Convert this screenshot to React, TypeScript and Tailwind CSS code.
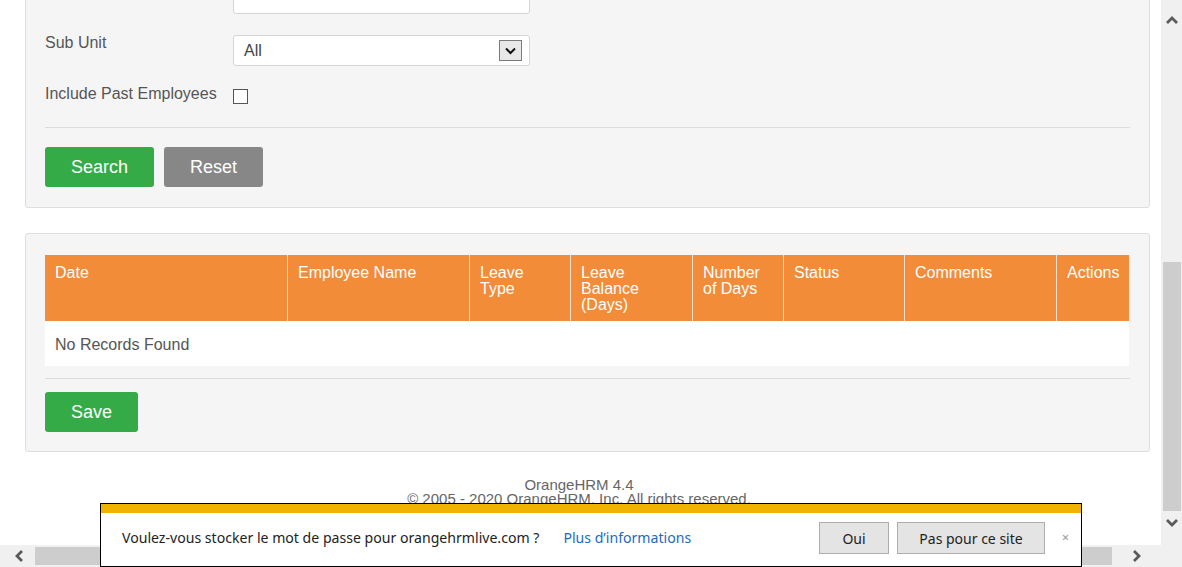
import React from 'react';

const columns = [
  { w: 'w-[243px]', label: ['Date'] },
  { w: 'w-[182px]', label: ['Employee Name'] },
  { w: 'w-[101px]', label: ['Leave', 'Type'] },
  { w: 'w-[122px]', label: ['Leave', 'Balance', '(Days)'] },
  { w: 'w-[91px]', label: ['Number', 'of Days'] },
  { w: 'w-[121px]', label: ['Status'] },
  { w: 'w-[152px]', label: ['Comments'] },
  { w: 'w-[72px]', label: ['Actions'] },
];

const Chevron = ({ dir }: { dir: 'up' | 'down' | 'left' | 'right' }) => {
  const paths: Record<string, string> = {
    up: 'M1 8 L6 3 L11 8',
    down: 'M1 3 L6 8 L11 3',
    left: 'M8 1 L3 6 L8 11',
    right: 'M3 1 L8 6 L3 11',
  };
  const vertical = dir === 'up' || dir === 'down';
  return (
    <svg width={vertical ? 12 : 11} height={vertical ? 11 : 12} viewBox={vertical ? '0 0 12 11' : '0 0 11 12'}>
      <path d={paths[dir]} fill="none" stroke="#5a5a5a" strokeWidth="2.8" />
    </svg>
  );
};

const SearchPanel = () => (
  <div className="-mt-[38px] border border-[#dedede] rounded-[3px] bg-[#f6f5f6] px-[19px] pt-[20px] pb-[20px]">
    <div className="flex">
      <div className="w-[188px]" />
      <div className="w-[297px] h-[31px] bg-white border border-[#d5d5d5] rounded-[3px]" />
    </div>

    <div className="flex items-start mt-[21px]">
      <label className="w-[188px] -mt-[1px] text-[16px] leading-[18px] text-[#555]">Sub Unit</label>
      <div className="w-[297px] h-[31px] bg-white border border-[#d5d5d5] rounded-[3px] flex items-center justify-between pl-[10px] pr-[7px]">
        <span className="text-[16px] text-[#444]">All</span>
        <div className="w-[23px] h-[21px] border border-[#7b7b7b] bg-[#e8e8e8] flex items-center justify-center">
          <svg width="11" height="8" viewBox="0 0 11 8">
            <path d="M1 1.5 L5.5 6 L10 1.5" fill="none" stroke="#111" strokeWidth="2" />
          </svg>
        </div>
      </div>
    </div>

    <div className="flex items-start mt-[23px]">
      <label className="w-[188px] -mt-[4px] text-[16px] leading-[18px] text-[#555]">Include Past Employees</label>
      <div className="w-[15px] h-[15px] border border-[#555] bg-white" />
    </div>

    <div className="mt-[23px] h-px bg-[#dcdcdc]" />

    <div className="flex gap-[10px] mt-[19px]">
      <button className="w-[109px] h-[40px] rounded-[3px] bg-[#35ab47] text-white text-[18px]">Search</button>
      <button className="w-[99px] h-[40px] rounded-[3px] bg-[#878787] text-white text-[18px]">Reset</button>
    </div>
  </div>
);

const ResultsPanel = () => (
  <div className="mt-[25px] border border-[#dedede] rounded-[3px] bg-[#f6f5f6] px-[19px] pt-[21px] pb-[19px]">
    <div className="w-[1084px]">
      <div className="flex h-[66px] bg-[#f28c38]">
        {columns.map((c, i) => (
          <div
            key={i}
            className={`${c.w} h-full pl-[10px] pt-[10px] text-[16px] leading-[16px] text-white ${i < columns.length - 1 ? 'border-r border-[#fbe1cb]' : ''}`}
          >
            {c.label.map((l, j) => (
              <div key={j}>{l}</div>
            ))}
          </div>
        ))}
      </div>
      <div className="h-[45px] bg-white flex items-center pl-[10px] pt-[2px] text-[16px] text-[#555]">No Records Found</div>
    </div>
    <div className="mt-[12px] h-px bg-[#dcdcdc]" />
    <button className="mt-[13px] w-[93px] h-[40px] rounded-[3px] bg-[#35ab47] text-white text-[18px]">Save</button>
  </div>
);

const PasswordBar = () => (
  <div className="absolute left-[100px] top-[503px] w-[982px] h-[64px] border border-black bg-white font-['Noto_Sans','Open_Sans',sans-serif]">
    <div className="h-[9px] bg-[#f0b400]" />
    <div className="flex items-center h-[53px] pl-[21px] pb-[3px]">
      <span className="text-[14.1px] text-[#222]">Voulez-vous stocker le mot de passe pour orangehrmlive.com ?</span>
      <span className="ml-[24px] text-[14.1px] text-[#1a6bbf]">Plus d’informations</span>
      <div className="flex-1" />
      <button className="w-[70px] h-[32px] bg-[#e4e4e4] border border-[#adadad] text-[14px] text-[#222]">Oui</button>
      <button className="ml-[8px] w-[148px] h-[32px] bg-[#e4e4e4] border border-[#adadad] text-[14px] text-[#222]">Pas pour ce site</button>
      <div className="w-[36px] flex justify-center pl-[5px] text-[13px] text-[#9a9a9a]">×</div>
    </div>
  </div>
);

export default function App() {
  return (
    <div className="relative w-[1182px] h-[567px] overflow-hidden bg-white font-['Liberation_Sans',Arial,sans-serif]">
      <div className="flex h-[545px]">
        <div className="w-[1161px] h-full overflow-hidden pl-[25px] pr-[11px]">
          <SearchPanel />
          <ResultsPanel />
          <div className="mt-[26px] mr-[17px] text-center text-[15px] leading-[14px] text-[#666]">
            <div>OrangeHRM 4.4</div>
            <div>© 2005 - 2020 OrangeHRM, Inc. All rights reserved.</div>
          </div>
        </div>

        {/* vertical scrollbar */}
        <div className="w-[21px] h-full bg-[#f0f0f0] flex flex-col items-center">
          <div className="h-[40px] flex items-center justify-center">
            <Chevron dir="up" />
          </div>
          <div className="h-[222px]" />
          <div className="w-[18px] h-[249px] bg-[#cdcdcd]" />
          <div className="h-[23px] flex items-center justify-center">
            <Chevron dir="down" />
          </div>
        </div>
      </div>

      {/* horizontal scrollbar */}
      <div className="flex h-[22px] bg-[#f0f0f0]">
        <div className="w-[35px] flex items-center justify-center pl-[4px]">
          <Chevron dir="left" />
        </div>
        <div className="w-[1077px] h-[18px] my-auto bg-[#cdcdcd]" />
        <div className="w-[49px] flex items-center justify-center">
          <Chevron dir="right" />
        </div>
        <div className="flex-1 bg-[#f0f0f0]" />
      </div>

      <PasswordBar />
    </div>
  );
}
